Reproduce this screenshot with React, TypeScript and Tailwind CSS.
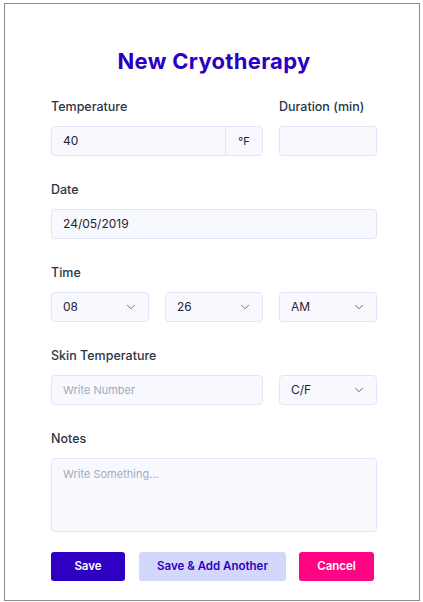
import { ChevronDown } from 'lucide-react';

const font = { fontFamily: 'Inter, "Noto Sans", sans-serif' };

const Label = ({ children }: { children: React.ReactNode }) => (
  <div className="h-4 mb-3 pt-px text-[12.5px] leading-4 font-medium text-[#2d3446]">{children}</div>
);

const Select = ({ value }: { value: string }) => (
  <div className="h-[30px] flex items-center justify-between pl-[11px] pr-[10px] bg-[#f8f9ff] border border-[#e3e6fb] rounded-[4px] text-[12px] text-[#1f2433]">
    <span>{value}</span>
    <ChevronDown size={14} strokeWidth={1.6} className="text-[#5f6476]" />
  </div>
);

const App = () => {
  return (
    <div className="w-[423px] h-[602px] bg-white pl-[4px] pt-[3px]" style={font}>
      <div className="w-[416px] h-[598px] border border-[#8c8c8c] pt-[43px] pl-[46px] pr-[42px]">
        <h1 className="text-center text-[22px] leading-7 font-bold text-[#2b00c4] tracking-[0.3px]">
          New Cryotherapy
        </h1>

        <div className="mt-[23px] grid grid-cols-3 gap-x-4">
          <div className="col-span-2">
            <Label>Temperature</Label>
            <div className="h-[30px] flex bg-[#f8f9ff] border border-[#e3e6fb] rounded-[4px] text-[12px] text-[#1f2433]">
              <div className="flex-1 flex items-center pl-[11px]">40</div>
              <div className="w-[37px] flex items-center justify-center border-l border-[#e3e6fb] text-[11px]">°F</div>
            </div>
          </div>
          <div>
            <Label>Duration (min)</Label>
            <div className="h-[30px] bg-[#f8f9ff] border border-[#e3e6fb] rounded-[4px]" />
          </div>
        </div>

        <div className="mt-[25px]">
          <Label>Date</Label>
          <div className="h-[30px] flex items-center pl-[11px] bg-[#f8f9ff] border border-[#e3e6fb] rounded-[4px] text-[12px] text-[#1f2433]">
            24/05/2019
          </div>
        </div>

        <div className="mt-[25px]">
          <Label>Time</Label>
          <div className="grid grid-cols-3 gap-x-4">
            <Select value="08" />
            <Select value="26" />
            <Select value="AM" />
          </div>
        </div>

        <div className="mt-[25px] grid grid-cols-3 gap-x-4">
          <div className="col-span-3">
            <Label>Skin Temperature</Label>
          </div>
          <div className="col-span-2 h-[30px] flex items-center pl-[11px] bg-[#f8f9ff] border border-[#e3e6fb] rounded-[4px] text-[11px] text-[#a3a9bd]">
            Write Number
          </div>
          <Select value="C/F" />
        </div>

        <div className="mt-[25px]">
          <Label>Notes</Label>
          <div className="h-[74px] pl-[11px] pt-[7px] bg-[#f8f9ff] border border-[#e3e6fb] rounded-[4px] text-[11px] text-[#a3a9bd]">
            Write Something...
          </div>
        </div>

        <div className="mt-[20px] flex text-[11.5px] font-semibold">
          <button className="w-[74px] h-[29px] rounded-[3px] bg-[#3000c2] text-white">Save</button>
          <button className="ml-[14px] w-[147px] h-[29px] rounded-[3px] bg-[#d3d7fb] text-[#3000c2]">
            Save &amp; Add Another
          </button>
          <button className="ml-[13px] w-[75px] h-[29px] rounded-[3px] bg-[#ff0583] text-white">Cancel</button>
        </div>
      </div>
    </div>
  );
};

export default App;
